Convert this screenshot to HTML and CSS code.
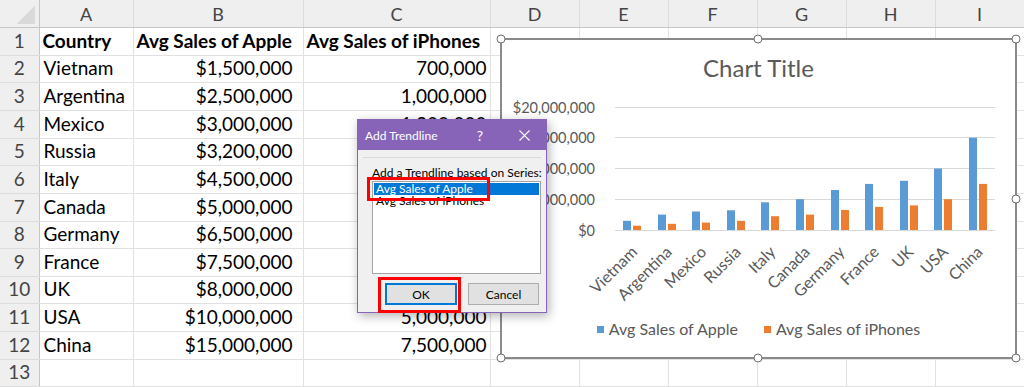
FILE: index.html
```html
<!DOCTYPE html>
<html lang="en">
<head>
    <meta charset="UTF-8">
    <meta name="viewport" content="width=device-width, initial-scale=1.0">
    <title>Add Trendline</title>
    <link rel="stylesheet" href="styles.css">
</head>
<body>
    <div class="workbook">
        <table class="sheet">
            <colgroup>
                <col class="col-num"><col class="col-a"><col class="col-b"><col class="col-c">
                <col class="col-x"><col class="col-x"><col class="col-x"><col class="col-x"><col class="col-x"><col class="col-x">
            </colgroup>
            <thead>
                <tr class="col-heads">
                    <th class="corner"></th><th>A</th><th>B</th><th>C</th><th>D</th><th>E</th><th>F</th><th>G</th><th>H</th><th>I</th>
                </tr>
            </thead>
            <tbody>
                <tr><th>1</th><td class="bold">Country</td><td class="bold">Avg Sales of Apple</td><td class="bold">Avg Sales of iPhones</td><td></td><td></td><td></td><td></td><td></td><td></td></tr>
                <tr><th>2</th><td>Vietnam</td><td class="money">$1,500,000</td><td class="num">700,000</td><td></td><td></td><td></td><td></td><td></td><td></td></tr>
                <tr><th>3</th><td>Argentina</td><td class="money">$2,500,000</td><td class="num">1,000,000</td><td></td><td></td><td></td><td></td><td></td><td></td></tr>
                <tr><th>4</th><td>Mexico</td><td class="money">$3,000,000</td><td class="num">1,200,000</td><td></td><td></td><td></td><td></td><td></td><td></td></tr>
                <tr><th>5</th><td>Russia</td><td class="money">$3,200,000</td><td class="num">1,500,000</td><td></td><td></td><td></td><td></td><td></td><td></td></tr>
                <tr><th>6</th><td>Italy</td><td class="money">$4,500,000</td><td class="num">2,250,000</td><td></td><td></td><td></td><td></td><td></td><td></td></tr>
                <tr><th>7</th><td>Canada</td><td class="money">$5,000,000</td><td class="num">2,500,000</td><td></td><td></td><td></td><td></td><td></td><td></td></tr>
                <tr><th>8</th><td>Germany</td><td class="money">$6,500,000</td><td class="num">3,250,000</td><td></td><td></td><td></td><td></td><td></td><td></td></tr>
                <tr><th>9</th><td>France</td><td class="money">$7,500,000</td><td class="num">3,750,000</td><td></td><td></td><td></td><td></td><td></td><td></td></tr>
                <tr><th>10</th><td>UK</td><td class="money">$8,000,000</td><td class="num">4,000,000</td><td></td><td></td><td></td><td></td><td></td><td></td></tr>
                <tr><th>11</th><td>USA</td><td class="money">$10,000,000</td><td class="num">5,000,000</td><td></td><td></td><td></td><td></td><td></td><td></td></tr>
                <tr><th>12</th><td>China</td><td class="money">$15,000,000</td><td class="num">7,500,000</td><td></td><td></td><td></td><td></td><td></td><td></td></tr>
                <tr><th>13</th><td></td><td></td><td></td><td></td><td></td><td></td><td></td><td></td><td></td></tr>
            </tbody>
        </table>

        <div class="chart">
            <div class="chart-title">Chart Title</div>
            <svg class="plot" width="513" height="230" viewBox="0 0 513 230">
                <g class="grid">
                    <line x1="113" y1="25.5" x2="493" y2="25.5"/>
                    <line x1="113" y1="55.5" x2="493" y2="55.5"/>
                    <line x1="113" y1="86.5" x2="493" y2="86.5"/>
                    <line x1="113" y1="117.5" x2="493" y2="117.5"/>
                    <line x1="113" y1="148.5" x2="493" y2="148.5"/>
                </g>
                <g class="y-labels">
                    <text x="93" y="30.5">$20,000,000</text>
                    <text x="93" y="60.5">$15,000,000</text>
                    <text x="93" y="91.5">$10,000,000</text>
                    <text x="93" y="122.5">$5,000,000</text>
                    <text x="93" y="153.5">$0</text>
                </g>
                <g class="bars-apple">
                    <rect x="121" y="138.8" width="8" height="9.2"/>
                    <rect x="156" y="132.6" width="8" height="15.4"/>
                    <rect x="190" y="129.5" width="8" height="18.5"/>
                    <rect x="225" y="128.3" width="8" height="19.7"/>
                    <rect x="259" y="120.3" width="8" height="27.7"/>
                    <rect x="294" y="117.2" width="8" height="30.8"/>
                    <rect x="329" y="108" width="8" height="40"/>
                    <rect x="363" y="101.9" width="8" height="46.1"/>
                    <rect x="398" y="98.8" width="8" height="49.2"/>
                    <rect x="432" y="86.5" width="8" height="61.5"/>
                    <rect x="467" y="55.7" width="8" height="92.3"/>
                </g>
                <g class="bars-iphone">
                    <rect x="131" y="143.7" width="8" height="4.3"/>
                    <rect x="166" y="141.8" width="8" height="6.2"/>
                    <rect x="200" y="140.6" width="8" height="7.4"/>
                    <rect x="235" y="138.8" width="8" height="9.2"/>
                    <rect x="269" y="134.2" width="8" height="13.8"/>
                    <rect x="304" y="132.6" width="8" height="15.4"/>
                    <rect x="339" y="128" width="8" height="20"/>
                    <rect x="373" y="124.9" width="8" height="23.1"/>
                    <rect x="408" y="123.4" width="8" height="24.6"/>
                    <rect x="442" y="117.2" width="8" height="30.8"/>
                    <rect x="477" y="101.9" width="8" height="46.1"/>
                </g>
                <g class="x-labels">
                    <text x="136.3" y="171" transform="rotate(-45 136.3 171)">Vietnam</text>
                    <text x="170.8" y="171" transform="rotate(-45 170.8 171)">Argentina</text>
                    <text x="205.4" y="171" transform="rotate(-45 205.4 171)">Mexico</text>
                    <text x="239.9" y="171" transform="rotate(-45 239.9 171)">Russia</text>
                    <text x="274.5" y="171" transform="rotate(-45 274.5 171)">Italy</text>
                    <text x="309" y="171" transform="rotate(-45 309 171)">Canada</text>
                    <text x="343.5" y="171" transform="rotate(-45 343.5 171)">Germany</text>
                    <text x="378.1" y="171" transform="rotate(-45 378.1 171)">France</text>
                    <text x="412.6" y="171" transform="rotate(-45 412.6 171)">UK</text>
                    <text x="447.2" y="171" transform="rotate(-45 447.2 171)">USA</text>
                    <text x="481.7" y="171" transform="rotate(-45 481.7 171)">China</text>
                </g>
            </svg>
            <div class="legend">
                <span class="legend-item"><i class="swatch apple"></i>Avg Sales of Apple</span>
                <span class="legend-item"><i class="swatch iphone"></i>Avg Sales of iPhones</span>
            </div>

            <span class="handle h-tl"></span>
            <span class="handle h-tm"></span>
            <span class="handle h-tr"></span>
            <span class="handle h-ml"></span>
            <span class="handle h-mr"></span>
            <span class="handle h-bl"></span>
            <span class="handle h-bm"></span>
            <span class="handle h-br"></span>
        </div>

        <div class="dialog">
            <div class="dialog-title">
                <span class="dialog-name">Add Trendline</span>
                <span class="dialog-btn">?</span>
                <span class="dialog-btn">
                    <svg width="11" height="11" viewBox="0 0 11 11"><path d="M0.5 0.5 L10.5 10.5 M10.5 0.5 L0.5 10.5" stroke="#fff" stroke-width="1.1" fill="none"/></svg>
                </span>
            </div>
            <div class="dialog-sep"></div>
            <div class="dialog-label">Add a Trendline based on Series:</div>
            <div class="listbox">
                <div class="list-item selected">Avg Sales of Apple</div>
                <div class="list-item">Avg Sales of iPhones</div>
            </div>
            <div class="dialog-buttons">
                <button class="btn btn-ok">OK</button>
                <button class="btn btn-cancel">Cancel</button>
            </div>
            <div class="mark mark-series"></div>
            <div class="mark mark-ok"></div>
        </div>
    </div>
</body>
</html>
```

FILE: styles.css
```css
body {
    margin: 0;
    font-family: "Lato", "DejaVu Sans", sans-serif;
    background-color: #fff;
    overflow: hidden;
}

.workbook {
    position: relative;
    width: 1024px;
    height: 387px;
    overflow: hidden;
}

/* spreadsheet grid */
.sheet {
    border-collapse: collapse;
    table-layout: fixed;
    width: 1024px;
    font-size: 19px;
    color: #000;
}

.col-num { width: 39px; }
.col-a { width: 94px; }
.col-b { width: 170px; }
.col-c { width: 187px; }
.col-x { width: 89px; }

.sheet tr {
    height: 27.64px;
}

.sheet td {
    border-right: 1px solid #e1e1e1;
    border-bottom: 1px solid #e1e1e1;
    padding: 0 4px 3px 4px;
    line-height: 22px;
    vertical-align: bottom;
    white-space: nowrap;
    overflow: hidden;
}

.sheet td.bold {
    font-weight: bold;
    padding-left: 3px;
}

.sheet td.money {
    text-align: right;
    padding-right: 10px;
}

.sheet td.num {
    text-align: right;
    padding-right: 3px;
}

.sheet th {
    background-color: #efefef;
    color: #444;
    font-weight: normal;
    font-size: 19px;
    line-height: 22px;
    padding: 0 0 3px 0;
    vertical-align: bottom;
    border-right: 1px solid #c6c6c6;
    border-bottom: 1px solid #dcdcdc;
}

.col-heads th {
    font-size: 18px;
    vertical-align: middle;
    padding: 0;
    border-right: 1px solid #dcdcdc;
    border-bottom: 1px solid #c6c6c6;
}

.col-heads th.corner {
    border-right: 1px solid #c6c6c6;
    background: #efefef linear-gradient(to top left, #d9d9d9 50%, transparent 50%) no-repeat right 4px bottom 3px / 18px 19px;
}

/* chart object */
.chart {
    position: absolute;
    left: 500px;
    top: 38px;
    width: 517px;
    height: 321px;
    box-sizing: border-box;
    border: 2px solid #8a8a8a;
    background-color: #fff;
}

.chart-title {
    margin-top: 14px;
    font-size: 24px;
    line-height: 28px;
    color: #595959;
    text-align: center;
}

.plot {
    display: block;
    overflow: visible;
}

.grid line {
    stroke: #d9d9d9;
    stroke-width: 1;
}

.y-labels text {
    font-size: 14.5px;
    fill: #595959;
    text-anchor: end;
}

.x-labels text {
    font-size: 16px;
    fill: #595959;
    text-anchor: end;
}

.bars-apple rect { fill: #5b9bd5; }
.bars-iphone rect { fill: #ed7d31; }

.legend {
    display: flex;
    justify-content: center;
    gap: 26px;
    margin-top: 7px;
    font-size: 16px;
    line-height: 20px;
    color: #595959;
}

.legend-item {
    display: flex;
    align-items: center;
}

.swatch {
    width: 7px;
    height: 7px;
    margin-right: 5px;
}

.swatch.apple { background-color: #5b9bd5; }
.swatch.iphone { background-color: #ed7d31; }

.handle {
    position: absolute;
    width: 7px;
    height: 7px;
    border: 1.5px solid #6e6e6e;
    border-radius: 50%;
    background-color: #fff;
    transform: translate(-50%, -50%);
}

.h-tl { left: -1px; top: -1px; }
.h-tm { left: 255.5px; top: -1px; }
.h-tr { left: 514px; top: -1px; }
.h-ml { left: -1px; top: 158.5px; }
.h-mr { left: 514px; top: 158.5px; }
.h-bl { left: -1px; top: 318px; }
.h-bm { left: 255.5px; top: 318px; }
.h-br { left: 514px; top: 318px; }

/* dialog */
.dialog {
    position: absolute;
    left: 357px;
    top: 119px;
    width: 190px;
    height: 194px;
    box-sizing: border-box;
    border: 1px solid #8764b8;
    background-color: #f0f0f0;
    box-shadow: 2px 3px 10px rgba(0, 0, 0, 0.3);
    font-size: 12px;
    color: #000;
    z-index: 2;
}

.dialog-title {
    display: flex;
    align-items: center;
    height: 30px;
    background-color: #8764b8;
    color: #fff;
}

.dialog-name {
    flex: 1;
    padding-left: 7px;
    font-size: 12px;
}

.dialog-btn {
    width: 44px;
    display: flex;
    justify-content: center;
    align-items: center;
    font-size: 14px;
}

.dialog-sep {
    margin: 7px 5px 0 5px;
    border-top: 1px solid #d9d9d9;
}

.dialog-label {
    margin: 8px 0 0 14px;
    line-height: 14px;
}

.listbox {
    margin: 1px 0 0 14px;
    width: 169px;
    height: 93px;
    box-sizing: border-box;
    border: 1px solid #a5a5a5;
    background-color: #fff;
    padding: 1px;
}

.list-item {
    height: 12px;
    line-height: 12px;
    padding-left: 2px;
    white-space: nowrap;
}

.list-item.selected {
    background-color: #0078d7;
    color: #fff;
}

.dialog-buttons {
    display: flex;
    margin: 9px 0 0 27px;
    gap: 11px;
}

.btn {
    height: 22px;
    box-sizing: border-box;
    background-color: #e1e1e1;
    border: 1px solid #adadad;
    font-family: "Lato", sans-serif;
    font-size: 12px;
    color: #000;
    padding: 0;
}

.btn-ok {
    width: 72px;
    border: 2px solid #0078d7;
}

.btn-cancel {
    width: 71px;
}

.mark {
    position: absolute;
    border: 3px solid #ff0000;
    box-sizing: border-box;
}

.mark-series {
    left: 9px;
    top: 57px;
    width: 123px;
    height: 24px;
}

.mark-ok {
    left: 20px;
    top: 157px;
    width: 83px;
    height: 36px;
}
```
